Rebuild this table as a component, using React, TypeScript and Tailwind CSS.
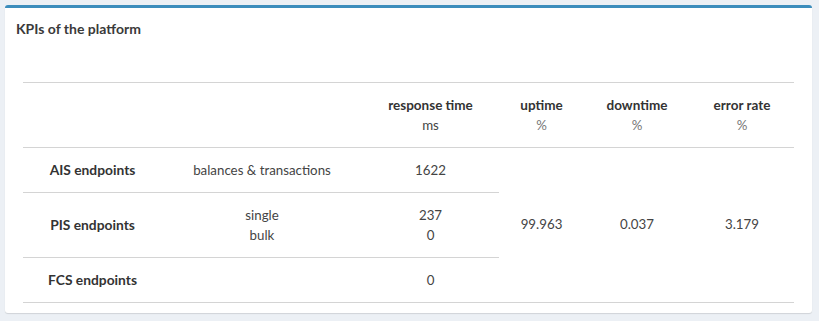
import React from 'react';

type Endpoint = {
  name: string;
  ops: string[];
  times: string[];
  tall?: boolean;
};

const endpoints: Endpoint[] = [
  { name: 'AIS endpoints', ops: ['balances & transactions'], times: ['1622'] },
  { name: 'PIS endpoints', ops: ['single', 'bulk'], times: ['237', '0'], tall: true },
  { name: 'FCS endpoints', ops: [], times: ['0'] },
];

const totals = { uptime: '99.963', downtime: '0.037', errorRate: '3.179' };

const Head: React.FC<{ title: string; unit: string; muted?: boolean }> = ({ title, unit, muted }) => (
  <th className="align-middle text-center font-normal">
    <div className="font-bold text-[#333] leading-[20px] text-[13.5px]">{title}</div>
    <div className={`leading-[20px] ${muted ? 'text-[#777]' : 'text-[#444]'}`}>{unit}</div>
  </th>
);

const App: React.FC = () => {
  return (
    <div className="min-h-[321px] w-[819px] bg-[#ecf0f5] pt-[5px] pl-[5px]" style={{ fontFamily: 'Lato, "Open Sans", sans-serif' }}>
      <div className="w-[807px] h-[308px] bg-white rounded-[3px] border-t-[3px] border-[#3c8dbc] shadow-[0_1px_1px_rgba(0,0,0,0.12)]">
        <div className="px-[11px] pt-[11px] h-[74px]">
          <h3 className="text-[14px] font-bold text-[#3a3a3a] leading-[20px]">KPIs of the platform</h3>
        </div>
        <div className="px-[18px]">
          <table className="w-[771px] border-collapse text-[13.3px] text-[#444] table-fixed">
            <colgroup>
              <col className="w-[139px]" />
              <col className="w-[200px]" />
              <col className="w-[137px]" />
              <col className="w-[85px]" />
              <col className="w-[106px]" />
              <col className="w-[104px]" />
            </colgroup>
            <thead>
              <tr className="h-[65px] border-t border-b border-[#d4d4d4]">
                <th />
                <th />
                <Head title="response time" unit="ms" />
                <Head title="uptime" unit="%" muted />
                <Head title="downtime" unit="%" muted />
                <Head title="error rate" unit="%" muted />
              </tr>
            </thead>
            <tbody>
              {endpoints.map((ep, i) => (
                <tr key={ep.name} className={`${ep.tall ? 'h-[65px]' : 'h-[45px]'} ${i < endpoints.length - 1 ? '' : 'border-b border-[#d4d4d4]'}`}>
                  <td className={`text-center font-bold text-[13.8px] text-[#333] ${i < endpoints.length - 1 ? 'border-b border-[#d4d4d4]' : ''}`}>{ep.name}</td>
                  <td className={`text-center ${i < endpoints.length - 1 ? 'border-b border-[#d4d4d4]' : ''}`}>
                    {ep.ops.map((op) => (
                      <div key={op} className="leading-[20px]">{op}</div>
                    ))}
                  </td>
                  <td className={`text-center ${i < endpoints.length - 1 ? 'border-b border-[#d4d4d4]' : ''}`}>
                    {ep.times.map((t, j) => (
                      <div key={j} className="leading-[20px]">{t}</div>
                    ))}
                  </td>
                  {i === 0 && (
                    <>
                      <td rowSpan={3} className="text-center align-middle">{totals.uptime}</td>
                      <td rowSpan={3} className="text-center align-middle">{totals.downtime}</td>
                      <td rowSpan={3} className="text-center align-middle">{totals.errorRate}</td>
                    </>
                  )}
                </tr>
              ))}
            </tbody>
          </table>
        </div>
      </div>
    </div>
  );
};

export default App;
